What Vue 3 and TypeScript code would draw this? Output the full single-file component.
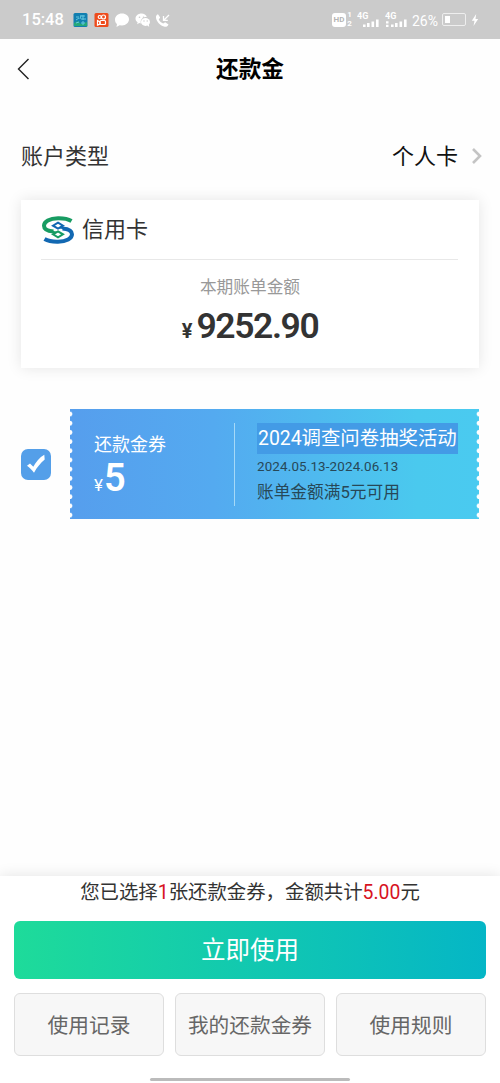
<script setup lang="ts">
import { ref } from 'vue'

const selected = ref(true)
const coupon = {
  name: '还款金券',
  amount: 5,
  title: '2024调查问卷抽奖活动',
  period: '2024.05.13-2024.06.13',
  condition: '账单金额满5元可用',
}
const links: string[] = ['使用记录', '我的还款金券', '使用规则']
</script>

<template>
  <div class="screen">
    <div class="status">
      <span class="clock">15:48</span>
      <svg class="apps" width="100" height="18" viewBox="0 0 100 18">
        <rect x="0.5" y="2" width="14" height="14" rx="1.5" fill="#127fb0" />
        <path d="M1 12l4-2 3 3 6-2v4H1z" fill="#25a878" />
        <path d="M3 6h3M3 9l3-2M8 4l-1 4M8 5h4M10 4v5M8 8h5M3 12l3-1M8 12h4M10 10v4" stroke="#65c8df" stroke-width="1" fill="none" />
        <rect x="21.5" y="2" width="14" height="14" rx="1.5" fill="#ee4b1c" />
        <g fill="none" stroke="#fff" stroke-width="1.2">
          <circle cx="26.7" cy="6" r="1.5" /><circle cx="30.5" cy="6" r="2" />
          <rect x="27" y="9.5" width="5.5" height="4" rx="1" /><path d="M24.5 9.5l2.5 1.5v2l-2.5 1z" />
        </g>
        <path d="M49 2.500c4 0 7 2.500 7 5.800S53 14.500 49 14.500l-2.500-.3-3 1.800.5-3C42.700 12 42 10.500 42 8.500c0-3.300 3-6 7-6z" fill="#fff" />
        <path d="M68.500 2.500c-3.300 0-6 2.200-6 5 0 1.600.8 2.900 2.100 3.800l-.5 2 2.200-1.200 1.500.3c-.8-4 2.200-6.500 6-6.300-.6-2.200-2.700-3.600-5.300-3.600z" fill="#fff" />
        <ellipse cx="72.500" cy="11" rx="4.500" ry="3.900" fill="#fff" /><path d="M74 14l2.200 2-.4-3z" fill="#fff" />
        <g fill="#cbcbcb"><circle cx="66.500" cy="6.200" r=".8" /><circle cx="70.500" cy="6.200" r=".8" /><circle cx="71" cy="10" r=".7" /><circle cx="74.200" cy="10" r=".7" /></g>
        <path d="M85 3.200l2.200 3.300-1.500 2c1 2 2.500 3.200 4.500 4.100l2-1.300 3.300 2.200c-.8 2-2.500 2.700-4.500 2.100-4.200-1.300-7.200-4.800-8-8.600-.3-1.700.4-3.200 2-3.800z" fill="#fff" />
        <path d="M96 4l-5 5M90.500 5v4.300h4.300" fill="none" stroke="#fff" stroke-width="1.300" />
      </svg>
      <div class="signals">
        <span class="hd">HD</span>
        <span class="sim"><i>1</i><i>2</i></span>
        <svg class="cell" width="24" height="18" viewBox="0 0 24 18">
          <text x="0" y="8">4G</text>
          <path d="M6 16v-2.500h2.600V16zM10 16v-4h2.600v4zM14.500 16v-5.500h2.600V16zM19 16V8.500h2.600V16z" fill="#fff" />
        </svg>
        <svg class="cell second" width="24" height="18" viewBox="0 0 24 18">
          <text x="0" y="8">4G</text>
          <path d="M1 16v-2.200h2.500V16zM1 12.500v-2.200h2.500v2.200zM6 16v-2.500h2.600V16zM10 16v-4h2.600v4zM14.500 16v-5.500h2.600V16zM19 16V8.500h2.600V16z" fill="#fff" />
        </svg>
        <span class="percent">26%</span>
        <span class="battery"><b /></span>
        <svg class="bolt" width="8" height="12" viewBox="0 0 8 12"><path d="M5.200 0L.8 6.800h2.700L2.500 12 7.200 5H4.500z" fill="#fff" /></svg>
      </div>
    </div>

    <header class="header">
      <svg class="back" width="14" height="24" viewBox="0 0 14 24"><path d="M11.500 2L1.500 12l10 10" fill="none" stroke="#222" stroke-width="1.400" /></svg>
      <h1>还款金</h1>
    </header>

    <div class="account">
      <span>账户类型</span>
      <span class="kind">个人卡</span>
      <svg width="12" height="18" viewBox="0 0 12 18"><path d="M2 2l7 7-7 7" fill="none" stroke="#c4c4c4" stroke-width="2.600" /></svg>
    </div>

    <section class="bill">
      <div class="bank">
        <svg width="34" height="28" viewBox="0 0 34 28" fill="none">
          <g stroke="#189c62">
            <path d="M30.500 5C27 3 22 2.200 17 2.300 8.500 2.400 3 5.700 3 9.800c0 3.700 4 5.300 9.500 5.800" stroke-width="4" />
            <path d="M17 15.300l5 3-5 3-5-3z" stroke-width="2" />
          </g>
          <g stroke="#1268b2">
            <path d="M3.500 23c3.500 2 8.500 2.800 13.500 2.700 8.500-.1 14-3.400 14-7.500 0-3.700-4-5.300-9.500-5.800" stroke-width="4" />
            <path d="M17 6.700l5 3-5 3-5-3z" stroke-width="2" />
          </g>
          <path d="M10 14.500l6.500 1.200-4 2.300z" fill="#189c62" />
          <path d="M24 13.500l-6.500-1.200 4-2.300z" fill="#1268b2" />
        </svg>
        <span>信用卡</span>
      </div>
      <div class="label">本期账单金额</div>
      <div class="total"><small>¥</small><strong>9252.90</strong></div>
    </section>

    <div class="choice">
      <button class="check" @click="selected = !selected">
        <svg v-if="selected" width="20" height="20" viewBox="0 0 20 20"><path d="M1 11.700l3-2.200 3.300 3.200C10 8 13.500 3.500 18.300.8l.4 4.800C14.500 9 11 13.500 8 18.700 6 16 3.700 13.500 1 11.700z" fill="#fff" /></svg>
      </button>
      <div class="coupon">
        <div class="value">
          <div class="name">{{ coupon.name }}</div>
          <div class="price"><small>¥</small><strong>{{ coupon.amount }}</strong></div>
        </div>
        <div class="detail">
          <div class="title">{{ coupon.title }}</div>
          <div class="period">{{ coupon.period }}</div>
          <div class="condition">{{ coupon.condition }}</div>
        </div>
      </div>
    </div>

    <footer class="footer">
      <p>您已选择<em>{{ selected ? 1 : 0 }}</em>张还款金券，金额共计<em>{{ selected ? '5.00' : '0.00' }}</em>元</p>
      <button class="primary">立即使用</button>
      <div class="links">
        <button v-for="item in links" :key="item">{{ item }}</button>
      </div>
      <div class="handle" />
    </footer>
  </div>
</template>

<style>
body {
  background: #fefefe;
}
</style>

<style scoped>
* {
  box-sizing: border-box;
}
.screen {
  width: 500px;
  height: 1083px;
  display: flex;
  flex-direction: column;
  overflow: hidden;
  background: #fefefe;
  color: #333;
  font-family: Roboto, 'Noto Sans CJK SC', sans-serif;
}
button {
  font-family: inherit;
  padding: 0;
  border: 0;
}
.status {
  height: 39px;
  flex: none;
  display: flex;
  align-items: center;
  padding-left: 22px;
  background: #cbcbcb;
  color: #fff;
}
.clock {
  width: 51px;
  font-size: 16.5px;
  font-weight: 500;
  line-height: 20px;
}
.signals {
  display: flex;
  align-items: center;
  margin-left: 159px;
}
.hd {
  width: 14px;
  height: 14px;
  border-radius: 3px;
  background: #fff;
  color: #b5b5b5;
  font-size: 8px;
  font-weight: 700;
  line-height: 14px;
  text-align: center;
}
.sim {
  width: 11px;
  padding-left: 1px;
  display: flex;
  flex-direction: column;
  font-size: 8px;
  font-weight: 700;
  line-height: 8px;
}
.sim i {
  height: 8px;
  font-style: normal;
  text-align: center;
  width: 5px;
}
.sim i + i {
  margin-top: 1px;
}
.cell text {
  fill: #fff;
  font: 700 9px Roboto, sans-serif;
}
.second {
  margin-left: 4px;
}
.percent {
  width: 28px;
  margin: 2px 2px 0 3px;
  font-size: 14px;
  line-height: 20px;
}
.battery {
  width: 24px;
  height: 13px;
  border: 1px solid #eee;
  border-radius: 2px;
  padding: 2px;
}
.battery b {
  display: block;
  width: 5px;
  height: 7px;
  background: #fff;
}
.bolt {
  margin-left: 5px;
}
.header {
  height: 60px;
  flex: none;
  display: grid;
  grid-template-columns: 36px 1fr 36px;
  align-items: center;
}
.back {
  margin-left: 17px;
}
h1 {
  margin: 2px 0 0;
  font-size: 22.7px;
  font-weight: 700;
  line-height: 32px;
  text-align: center;
  color: #000;
}
.account {
  height: 36px;
  flex: none;
  margin: 39px 17px 0 21px;
  display: flex;
  align-items: center;
  font-size: 22px;
  line-height: 36px;
}
.account span {
  padding-top: 1px;
}
.kind {
  margin-left: auto;
  margin-right: 13px;
  color: #111;
}
.bill {
  height: 168px;
  flex: none;
  margin: 26px 21px 0;
  padding: 0 21px 0 20px;
  background: #fff;
  box-shadow: 0 0 14px rgba(0, 0, 0, 0.1);
  text-align: center;
}
.bank {
  height: 60px;
  display: flex;
  align-items: center;
  gap: 7px;
  font-size: 22px;
  border-bottom: 1px solid #e8e8e8;
}
.bank span {
  padding-bottom: 5px;
}
.label {
  margin-top: 16px;
  padding-left: 1px;
  font-size: 16.7px;
  line-height: 24px;
  color: #999;
}
.total {
  display: flex;
  justify-content: center;
  align-items: baseline;
  gap: 4px;
  height: 50px;
  padding-left: 1px;
  line-height: 52px;
}
.total small {
  font-size: 20px;
  font-weight: 700;
}
.total strong {
  font-size: 35.5px;
  font-weight: 600;
  letter-spacing: -1.4px;
}
.choice {
  display: flex;
  align-items: center;
  gap: 19px;
  margin: 41px 21px 0;
}
.check {
  width: 30px;
  height: 31px;
  border-radius: 7px;
  background: #549fe9;
  display: grid;
  place-items: center;
}
.coupon {
  width: 409px;
  height: 110px;
  display: flex;
  padding: 14px 0 13px 24px;
  background:
    radial-gradient(circle at 0 5px, #fefefe 2px, transparent 2.8px) 0 0 / 3px 9.2px repeat-y,
    radial-gradient(circle at 3px 5px, #fefefe 2px, transparent 2.8px) 100% 0 / 3px 9.2px repeat-y,
    linear-gradient(90deg, #569eed, #54aaf0 35%, #4ac9ee 85%, #4acaf0);
  color: #fff;
}
.value {
  width: 141px;
  border-right: 1px solid #a5d9f7;
}
.name {
  margin-top: 9px;
  font-size: 18px;
  line-height: 26px;
}
.price {
  display: flex;
  align-items: baseline;
  gap: 1px;
  line-height: 40px;
}
.price small {
  font-size: 17px;
}
.price strong {
  font-size: 38px;
  font-weight: 600;
}
.detail {
  padding-left: 22px;
  color: #274858;
}
.title {
  height: 31px;
  padding: 0 1px;
  background: #439be6;
  color: #fff;
  font-size: 19.4px;
  line-height: 31px;
}
.period {
  margin-top: 3px;
  font-size: 13.4px;
  letter-spacing: 0.15px;
  line-height: 20px;
}
.condition {
  margin-top: 4px;
  font-size: 16.7px;
  line-height: 24px;
}
.footer {
  height: 207px;
  flex: none;
  margin-top: auto;
  padding: 0 14px;
  background: #fff;
  box-shadow: 0 0 14px rgba(0, 0, 0, 0.11);
}
p {
  margin: 0;
  height: 45px;
  text-align: center;
  font-size: 19.4px;
  line-height: 33px;
}
em {
  font-style: normal;
  color: #d7141f;
}
.primary {
  display: block;
  width: 472px;
  height: 58px;
  border-radius: 6px;
  background: linear-gradient(90deg, #1edb9a, #05b6c6);
  color: #fff;
  font-size: 24.5px;
  line-height: 59px;
}
.links {
  display: grid;
  grid-template-columns: repeat(3, 150px);
  gap: 11px;
  margin-top: 14px;
}
.links button {
  height: 63px;
  padding-bottom: 2px;
  border: 1px solid #dedede;
  border-radius: 6px;
  background: #f7f7f7;
  color: #666;
  font-size: 20.7px;
}
.handle {
  width: 200px;
  height: 3px;
  margin: 22px auto 0;
  border-radius: 2px;
  background: #bbb;
}
</style>
